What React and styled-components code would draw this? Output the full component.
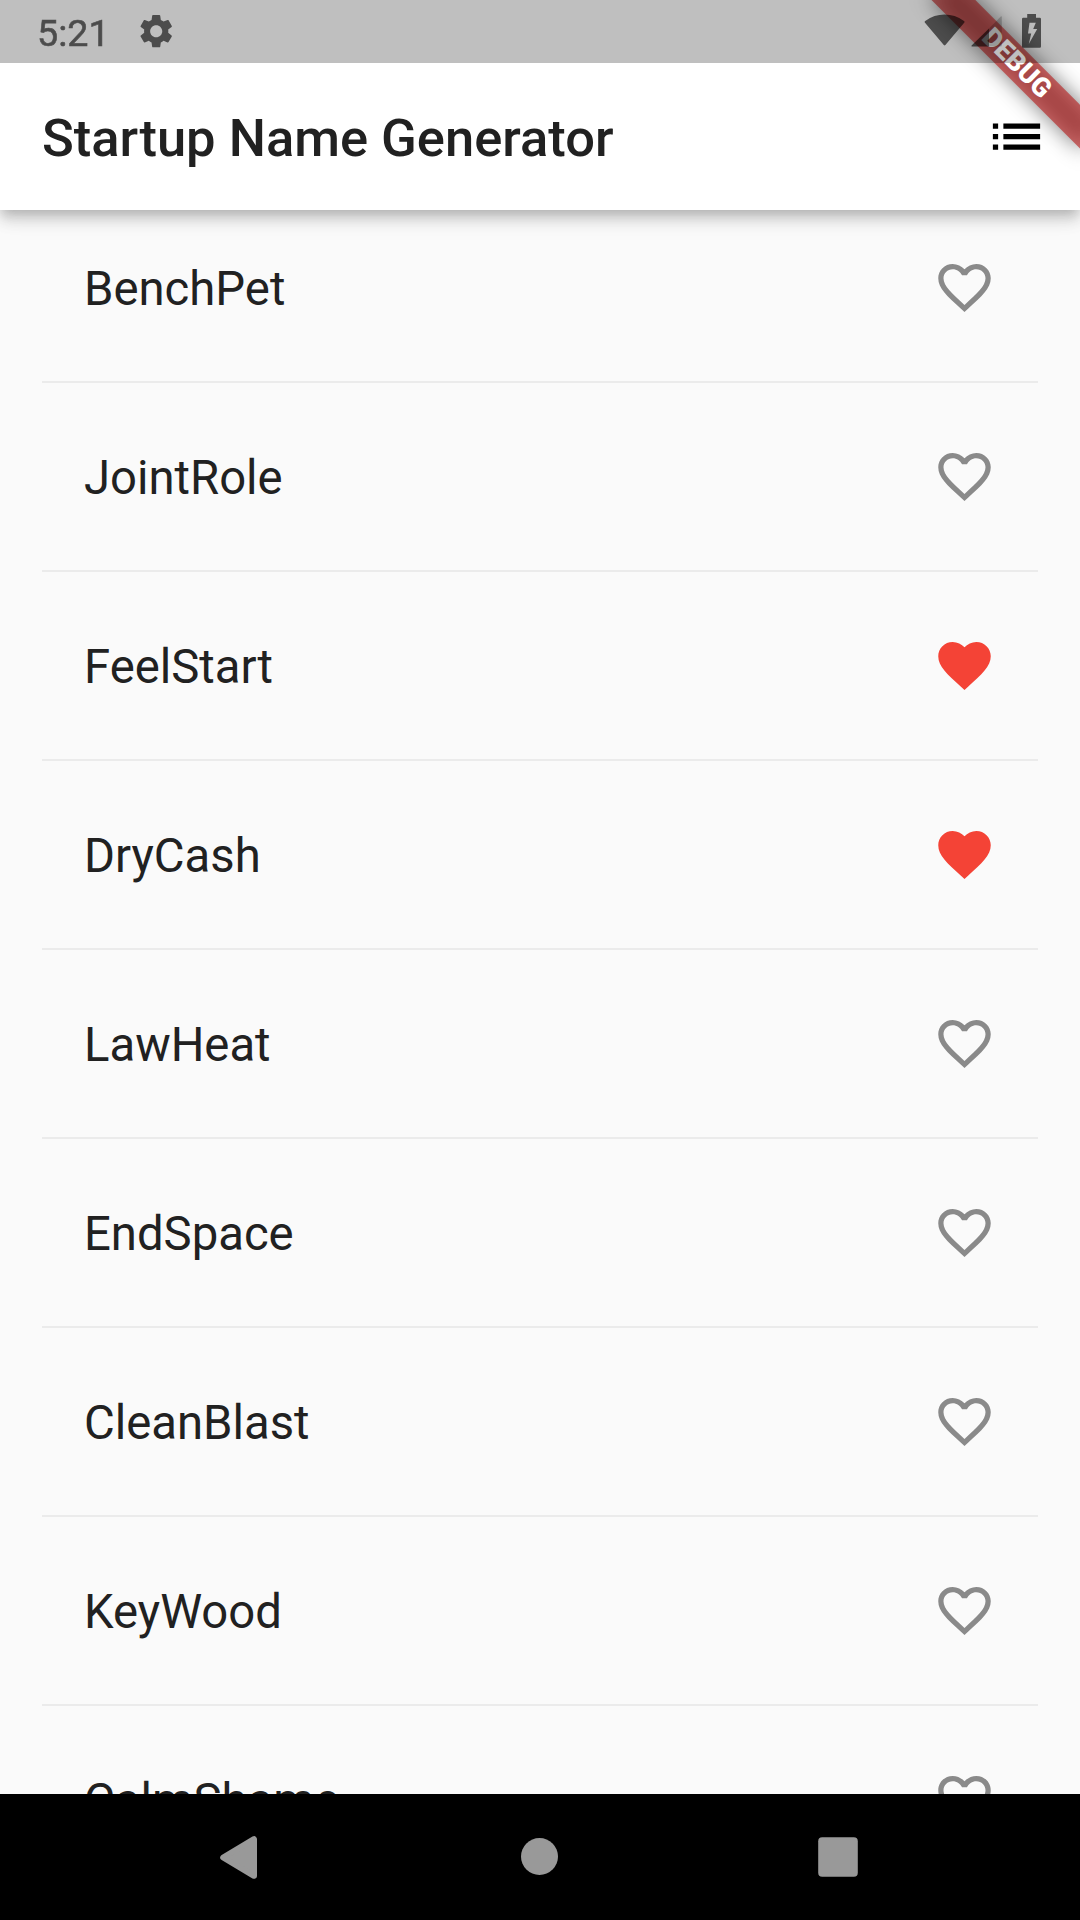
import React from "react";
import styled, { createGlobalStyle } from "styled-components";

const Global = createGlobalStyle`
  * { box-sizing: border-box; }
  body { margin: 0; background: #fafafa; font-family: Roboto, "Noto Sans", sans-serif; }
`;

const Screen = styled.div`
  position: relative;
  display: flex;
  flex-direction: column;
  width: 1080px;
  height: 1920px;
  overflow: hidden;
  background: #fafafa;
`;

const AppBar = styled.header`
  position: relative;
  z-index: 1;
  flex: none;
  display: flex;
  align-items: center;
  justify-content: space-between;
  height: 210px;
  padding: 63px 0 0 42px;
  background: #fff;
  box-shadow: 0 5.25px 10.5px -2.6px rgba(0, 0, 0, 0.16),
    0 10.5px 13.1px 0 rgba(0, 0, 0, 0.11),
    0 2.6px 26.2px 0 rgba(0, 0, 0, 0.11);
`;

const Title = styled.h1`
  margin: 0;
  padding-top: 2px;
  font-size: 52.5px;
  font-weight: 500;
  line-height: 62px;
  color: #212121;
  white-space: nowrap;
`;

const IconButton = styled.button`
  display: flex;
  align-items: center;
  justify-content: center;
  width: 126px;
  height: 126px;
  padding: 0 1px 0 0;
  border: 0;
  background: none;
`;

const Icon = styled.svg`
  display: block;
  flex: none;
  width: ${(p) => p.$size || 63}px;
  height: ${(p) => p.$size || 63}px;
  fill: ${(p) => p.$color || "#000"};
`;

const List = styled.main`
  flex: 1;
  min-height: 0;
  overflow: hidden;
  padding: 4px 42px 0;
`;

const Tile = styled.div`
  display: flex;
  align-items: center;
  justify-content: space-between;
  height: 147px;
  padding: 0 42px;
`;

const Name = styled.span`
  padding-top: 2px;
  font-size: 47.25px;
  line-height: 56px;
  color: #212121;
`;

const Divider = styled.hr`
  height: 2px;
  margin: 20px 0;
  border: 0;
  background: #ebebeb;
`;

const NavBar = styled.nav`
  flex: none;
  display: flex;
  align-items: center;
  height: 126px;
  padding-left: 87px;
  background: #000;
`;

const NavButton = styled.button`
  display: flex;
  align-items: center;
  justify-content: center;
  width: ${(p) => p.$width}px;
  height: 126px;
  padding: 0;
  border: 0;
  background: none;
`;

const StatusBar = styled.div`
  position: absolute;
  inset: 0 0 auto 0;
  z-index: 3;
  display: flex;
  align-items: center;
  justify-content: space-between;
  height: 63px;
  padding: 0 36px 0 37px;
  background: rgba(0, 0, 0, 0.25);
`;

const StatusGroup = styled.div`
  display: flex;
  align-items: center;
  gap: 26.5px;
`;

const Clock = styled.span`
  padding-top: 3px;
  font-size: 37.7px;
  font-weight: 400;
  line-height: 43px;
  color: #000;
  -webkit-text-stroke: 0.6px #000;
  opacity: 0.6;
`;

const StatusIcons = styled.svg`
  display: block;
  width: 120px;
  height: 63px;
  fill: #000;
`;

const BannerCorner = styled.div`
  position: absolute;
  top: 0;
  right: 0;
  z-index: 2;
  width: 210px;
  height: 210px;
  overflow: hidden;
  pointer-events: none;
`;

const BannerPivot = styled.div`
  position: absolute;
  top: 0;
  left: 210px;
  transform: rotate(45deg);
  transform-origin: 0 0;
`;

const BannerShadow = styled.div`
  position: absolute;
  left: -105px;
  top: 73.5px;
  width: 210px;
  height: 31.5px;
  background: rgba(0, 0, 0, 0.5);
  filter: blur(10.4px);
`;

const BannerBand = styled.div`
  position: absolute;
  left: -105px;
  top: 73.5px;
  width: 210px;
  height: 31.5px;
  background: rgba(183, 28, 28, 0.627);
  color: #fff;
  font-size: 26.8px;
  font-weight: 900;
  line-height: 30px;
  text-align: center;
`;

const names = [
  ["BenchPet", false],
  ["JointRole", false],
  ["FeelStart", true],
  ["DryCash", true],
  ["LawHeat", false],
  ["EndSpace", false],
  ["CleanBlast", false],
  ["KeyWood", false],
  ["CalmShame", false],
];

const HEART =
  "M12 21.35l-1.45-1.32C5.4 15.36 2 12.28 2 8.5 2 5.42 4.42 3 7.5 3c1.74 0 3.41.81 4.5 2.09C13.09 3.81 14.76 3 16.5 3 19.58 3 22 5.42 22 8.5c0 3.78-3.4 6.86-8.55 11.54L12 21.35z";
const HEART_OUTLINE =
  "M16.5 3c-1.74 0-3.41.81-4.5 2.09C10.91 3.81 9.24 3 7.5 3 4.42 3 2 5.42 2 8.5c0 3.78 3.4 6.86 8.55 11.54L12 21.35l1.45-1.32C18.6 15.36 22 12.28 22 8.5 22 5.42 19.58 3 16.5 3zm-4.4 15.55l-.1.1-.1-.1C7.14 14.24 4 11.39 4 8.5 4 6.5 5.5 5 7.5 5c1.54 0 3.04.99 3.57 2.36h1.87C13.46 5.99 14.96 5 16.5 5c2 0 3.5 1.5 3.5 3.5 0 2.89-3.14 5.74-7.9 10.05z";
const GEAR =
  "M19.14,12.94c0.04-0.3,0.06-0.61,0.06-0.94c0-0.32-0.02-0.64-0.07-0.94l2.03-1.58c0.18-0.14,0.23-0.41,0.12-0.61l-1.92-3.32c-0.12-0.22-0.37-0.29-0.59-0.22l-2.39,0.96c-0.5-0.38-1.03-0.7-1.62-0.94L14.4,2.81c-0.04-0.24-0.24-0.41-0.48-0.41h-3.84c-0.24,0-0.43,0.17-0.47,0.41L9.25,5.35C8.66,5.59,8.12,5.92,7.63,6.29L5.24,5.33c-0.22-0.08-0.47,0-0.59,0.22L2.74,8.87C2.62,9.08,2.66,9.34,2.86,9.48l2.03,1.58C4.84,11.36,4.8,11.69,4.8,12s0.02,0.64,0.07,0.94l-2.03,1.58c-0.18,0.14-0.23,0.41-0.12,0.61l1.92,3.32c0.12,0.22,0.37,0.29,0.59,0.22l2.39-0.96c0.5,0.38,1.03,0.7,1.62,0.94l0.36,2.54c0.05,0.24,0.24,0.41,0.48,0.41h3.84c0.24,0,0.44-0.17,0.47-0.41l0.36-2.54c0.59-0.24,1.13-0.56,1.62-0.94l2.39,0.96c0.22,0.08,0.47,0,0.59-0.22l1.92-3.32c0.12-0.22,0.07-0.47-0.12-0.61L19.14,12.94z M12,15.6c-1.98,0-3.6-1.62-3.6-3.6s1.62-3.6,3.6-3.6s3.6,1.62,3.6,3.6S13.98,15.6,12,15.6z";

export default function App() {
  return (
    <Screen>
      <Global />
      <AppBar>
        <Title>Startup Name Generator</Title>
        <IconButton aria-label="Saved names">
          <Icon viewBox="0 0 24 24">
            <path d="M3 13h2v-2H3v2zm0 4h2v-2H3v2zm0-8h2V7H3v2zm4 4h14v-2H7v2zm0 4h14v-2H7v2zM7 7v2h14V7H7z" />
          </Icon>
        </IconButton>
      </AppBar>
      <List>
        {names.map(([name, saved]) => (
          <React.Fragment key={name}>
            <Tile>
              <Name>{name}</Name>
              <Icon viewBox="0 0 24 24" $color={saved ? "#f44336" : "#8a8a8a"}>
                <path d={saved ? HEART : HEART_OUTLINE} />
              </Icon>
            </Tile>
            <Divider />
          </React.Fragment>
        ))}
      </List>
      <NavBar>
        <NavButton $width={303} aria-label="Back">
          <svg width="37" height="43" viewBox="0 0 37 43">
            <path d="M34 3.2V39.8L3.2 21.5Z" fill="#999" stroke="#999" strokeWidth="6" strokeLinejoin="round" />
          </svg>
        </NavButton>
        <NavButton $width={299} aria-label="Home">
          <svg width="37" height="38" viewBox="0 0 37 38">
            <circle cx="18.5" cy="18.5" r="18.5" fill="#999" />
          </svg>
        </NavButton>
        <NavButton $width={298} aria-label="Recent apps">
          <svg width="40" height="40" viewBox="0 0 40 40">
            <rect x="0.2" y="0.2" width="39.6" height="39.6" rx="4" fill="#999" />
          </svg>
        </NavButton>
      </NavBar>
      <BannerCorner>
        <BannerPivot>
          <BannerShadow />
          <BannerBand>DEBUG</BannerBand>
        </BannerPivot>
      </BannerCorner>
      <StatusBar>
        <StatusGroup>
          <Clock>5:21</Clock>
          <Icon viewBox="0 0 24 24" $size={40.4} $color="rgba(0,0,0,0.6)">
            <path d={GEAR} />
          </Icon>
        </StatusGroup>
        <StatusIcons viewBox="924 0 120 63" fillOpacity="0.6">
          <path d="M943.8 45Q944.6 45.8 945.4 45L964.4 22.6Q965 21.6 964 21Q955 14.6 944.6 14.6T925.2 21Q924.2 21.6 924.8 22.6Z" />
          <path d="M989 28.5L1000.8 16.4Q1001.8 15.8 1001.8 17V45.5Q1001.8 46.5 1000.8 46.5H989Z" fillOpacity="0.2" />
          <path d="M971.6 45.6L989 28.5V46.5H972Q971 46.5 971.6 45.6Z" />
          <path
            fillRule="evenodd"
            d="M1027.2 14H1036V17.8H1039.8Q1041 17.8 1041 19V46.5Q1041 47.7 1039.8 47.7H1023.2Q1022 47.7 1022 46.5V19Q1022 17.8 1023.2 17.8H1027.2ZM1029.5 22.8L1028 33.5H1031.2L1028.8 44L1037.2 29H1033.2L1035.8 22.8Z"
          />
        </StatusIcons>
      </StatusBar>
    </Screen>
  );
}
